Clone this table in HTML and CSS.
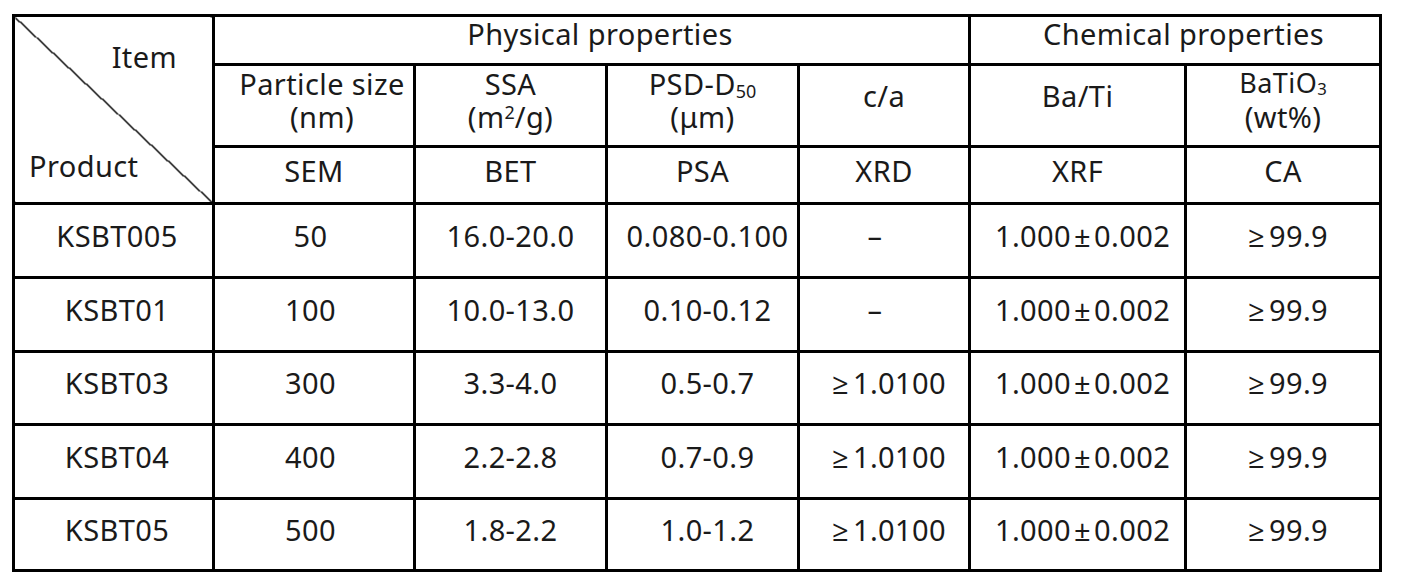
FILE: index.html
```html
<!DOCTYPE html>
<html lang="en">
<head>
<meta charset="utf-8">
<title>BaTiO3 product specifications</title>
<link rel="stylesheet" href="styles.css">
</head>
<body>
<table class="spec">
  <colgroup>
    <col class="c-prod">
    <col class="c-size">
    <col class="c-ssa">
    <col class="c-psd">
    <col class="c-ca">
    <col class="c-bati">
    <col class="c-wt">
  </colgroup>
  <thead>
    <tr class="r-group">
      <th class="corner" rowspan="3">
        <div class="corner-item">Item</div>
        <div class="corner-product">Product</div>
      </th>
      <th class="group" colspan="4">Physical properties</th>
      <th class="group" colspan="2">Chemical properties</th>
    </tr>
    <tr class="r-names">
      <th class="shift">Particle size<br>(nm)</th>
      <th>SSA<br>(m<sup>2</sup>/g)</th>
      <th>PSD-D<sub>50</sub><br>(μm)</th>
      <th class="single">c/a</th>
      <th class="single">Ba/Ti</th>
      <th><span class="formula">BaTiO<sub>3</sub></span>(wt%)</th>
    </tr>
    <tr class="r-methods">
      <th>SEM</th>
      <th>BET</th>
      <th>PSA</th>
      <th>XRD</th>
      <th>XRF</th>
      <th>CA</th>
    </tr>
  </thead>
  <tbody>
    <tr class="r1">
      <td>KSBT005</td><td>50</td><td>16.0-20.0</td><td>0.080-0.100</td><td class="dash">–</td><td>1.000<span class="pm">±</span>0.002</td><td><span class="ge">≥</span>99.9</td>
    </tr>
    <tr class="r2">
      <td>KSBT01</td><td>100</td><td>10.0-13.0</td><td>0.10-0.12</td><td class="dash">–</td><td>1.000<span class="pm">±</span>0.002</td><td><span class="ge">≥</span>99.9</td>
    </tr>
    <tr class="r3">
      <td>KSBT03</td><td>300</td><td>3.3-4.0</td><td>0.5-0.7</td><td><span class="ge">≥</span>1.0100</td><td>1.000<span class="pm">±</span>0.002</td><td><span class="ge">≥</span>99.9</td>
    </tr>
    <tr class="r4">
      <td>KSBT04</td><td>400</td><td>2.2-2.8</td><td>0.7-0.9</td><td><span class="ge">≥</span>1.0100</td><td>1.000<span class="pm">±</span>0.002</td><td><span class="ge">≥</span>99.9</td>
    </tr>
    <tr class="r5">
      <td>KSBT05</td><td>500</td><td>1.8-2.2</td><td>1.0-1.2</td><td><span class="ge">≥</span>1.0100</td><td>1.000<span class="pm">±</span>0.002</td><td><span class="ge">≥</span>99.9</td>
    </tr>
  </tbody>
</table>
</body>
</html>
```

FILE: styles.css
```css
* { box-sizing: border-box; }

html, body {
  margin: 0;
  background: #ffffff;
}

body {
  font-family: "Noto Sans", "Open Sans", sans-serif;
  color: #1a1a1a;
}

.spec {
  border-collapse: collapse;
  table-layout: fixed;
  width: 1370px;
  margin: 14px 0 0 12px;
  font-size: 29px;
  line-height: 1.15;
  letter-spacing: 0.4px;
}

.c-prod { width: 200px; }
.c-size { width: 201px; }
.c-ssa  { width: 192px; }
.c-psd  { width: 192px; }
.c-ca   { width: 171px; }
.c-bati { width: 216px; }
.c-wt   { width: 195px; }

.spec th,
.spec td {
  border: 3px solid #000;
  padding: 0 0 8px;
  text-align: center;
  vertical-align: middle;
  font-weight: 400;
  white-space: nowrap;
}

.r-group   { height: 49px; }
.r-names   { height: 82px; }
.r-methods { height: 57px; }
.r1 { height: 74px; }
.r2 { height: 74px; }
.r3 { height: 73px; }
.r4 { height: 74px; }
.r5 { height: 72px; }

.spec .r-group th.group { padding: 0 0 12px 17px; }
.spec .r-names th { padding-bottom: 11px; }
.spec .r-names th.single { padding-bottom: 19px; }
.spec .r-names th.shift { padding-left: 16px; }

.spec tbody td { padding-bottom: 10px; }
.spec tbody td:nth-child(1) { padding-left: 7px; }
.spec tbody td:nth-child(2) { padding-right: 7px; }
.spec tbody td:nth-child(4),
.spec tbody td:nth-child(5),
.spec tbody td:nth-child(6),
.spec tbody td:nth-child(7) { padding-left: 10px; }
.spec tbody td.dash { padding-left: 0; padding-right: 18px; }

.spec th.corner {
  padding: 0;
  vertical-align: top;
  text-align: left;
  background: linear-gradient(to top right,
    transparent calc(50% - 0.9px),
    #000 calc(50% - 0.9px),
    #000 calc(50% + 0.5px),
    transparent calc(50% + 0.5px));
}

.corner-item {
  margin-top: 23px;
  padding-right: 35px;
  text-align: right;
}

.corner-product {
  margin-top: 76px;
  padding-left: 14px;
}

sub, sup {
  font-size: 0.62em;
  line-height: 0;
  letter-spacing: 0;
}

sub { vertical-align: -0.14em; }
sup { vertical-align: 0.5em; }

.formula {
  display: block;
  font-size: 27px;
  margin-bottom: 2px;
}

.pm { margin: 0 3px; }
.ge { margin-right: 4px; }
```
